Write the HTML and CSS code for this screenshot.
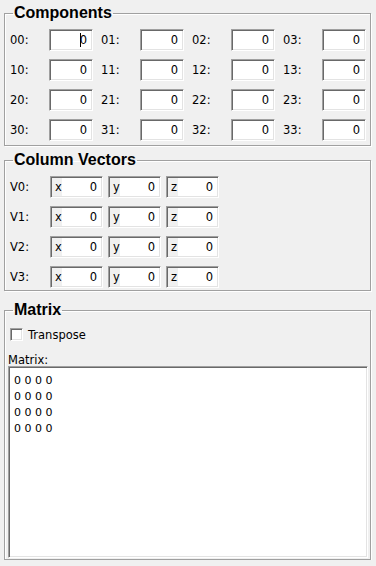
FILE: index.html
```html
<!DOCTYPE html>
<html>
<head>
	<title>Matrix</title>
	<link rel="stylesheet" href="styles.css">
</head>
<body>
	<fieldset class="group comps">
		<legend>Components</legend>
		<div class="grid">
			<div class="cell"><label>00:</label><span class="focus"><input class="num" value="0"><span class="caret"></span></span></div>
			<div class="cell"><label>01:</label><input class="num" value="0"></div>
			<div class="cell"><label>02:</label><input class="num" value="0"></div>
			<div class="cell"><label>03:</label><input class="num" value="0"></div>
			<div class="cell"><label>10:</label><input class="num" value="0"></div>
			<div class="cell"><label>11:</label><input class="num" value="0"></div>
			<div class="cell"><label>12:</label><input class="num" value="0"></div>
			<div class="cell"><label>13:</label><input class="num" value="0"></div>
			<div class="cell"><label>20:</label><input class="num" value="0"></div>
			<div class="cell"><label>21:</label><input class="num" value="0"></div>
			<div class="cell"><label>22:</label><input class="num" value="0"></div>
			<div class="cell"><label>23:</label><input class="num" value="0"></div>
			<div class="cell"><label>30:</label><input class="num" value="0"></div>
			<div class="cell"><label>31:</label><input class="num" value="0"></div>
			<div class="cell"><label>32:</label><input class="num" value="0"></div>
			<div class="cell"><label>33:</label><input class="num" value="0"></div>
		</div>
	</fieldset>

	<fieldset class="group vectors">
		<legend>Column Vectors</legend>
		<div class="vecs">
			<div class="vrow">
				<label>V0:</label>
				<span class="vec"><span class="axis">x</span><input value="0"></span>
				<span class="vec"><span class="axis">y</span><input value="0"></span>
				<span class="vec"><span class="axis">z</span><input value="0"></span>
			</div>
			<div class="vrow">
				<label>V1:</label>
				<span class="vec"><span class="axis">x</span><input value="0"></span>
				<span class="vec"><span class="axis">y</span><input value="0"></span>
				<span class="vec"><span class="axis">z</span><input value="0"></span>
			</div>
			<div class="vrow">
				<label>V2:</label>
				<span class="vec"><span class="axis">x</span><input value="0"></span>
				<span class="vec"><span class="axis">y</span><input value="0"></span>
				<span class="vec"><span class="axis">z</span><input value="0"></span>
			</div>
			<div class="vrow">
				<label>V3:</label>
				<span class="vec"><span class="axis">x</span><input value="0"></span>
				<span class="vec"><span class="axis">y</span><input value="0"></span>
				<span class="vec"><span class="axis">z</span><input value="0"></span>
			</div>
		</div>
	</fieldset>

	<fieldset class="group matrix">
		<legend>Matrix</legend>
		<div class="check">
			<input type="checkbox" id="transpose">
			<label for="transpose">Transpose</label>
		</div>
		<div class="caption">Matrix:</div>
		<textarea class="out">0 0 0 0
0 0 0 0
0 0 0 0
0 0 0 0</textarea>
	</fieldset>
</body>
</html>
```

FILE: styles.css
```css
body {
	margin: 0;
	background: #f0f0f0;
	color: #000;
	font: 11.5px "DejaVu Sans", sans-serif;
}

.group {
	margin: 0 5px 0 4px;
	padding: 0 2px 0 3px;
	border: 1px solid #a0a0a0;
	box-shadow: inset 1px 1px 0 #fff, 1px 1px 0 #fff;
}

.group legend {
	margin-left: 5px;
	padding: 0 1px;
	font: bold 16px "Liberation Sans", Arial, sans-serif;
	line-height: 18px;
}

.comps {
	margin-top: 4px;
	padding-bottom: 4px;
}

.vectors {
	margin-top: 5px;
	padding-bottom: 2px;
}

.matrix {
	margin-top: 10px;
	padding-bottom: 1px;
}

/* components */
.grid {
	display: grid;
	grid-template-columns: repeat(4, 83px);
	gap: 8px;
	padding: 7px 0 0 2px;
}

.cell {
	display: flex;
	align-items: center;
}

.cell label {
	width: 39px;
}

.num {
	width: 44px;
	height: 22px;
	box-sizing: border-box;
	margin: 0;
	padding: 0 5px 0 0;
	border: 1px solid;
	border-color: #a0a0a0 #fff #fff #a0a0a0;
	box-shadow: inset 1px 1px 0 #696969, inset -1px -1px 0 #e3e3e3;
	background: #fff;
	font: inherit;
	color: #000;
	text-align: right;
	outline: none;
}

.focus {
	position: relative;
	display: block;
	width: 44px;
	height: 22px;
}

.caret {
	position: absolute;
	right: 12px;
	top: 4px;
	width: 1px;
	height: 14px;
	background: #000;
}

/* column vectors */
.vecs {
	display: flex;
	flex-direction: column;
	gap: 8px;
	padding: 7px 0 0 2px;
}

.vrow {
	display: flex;
	align-items: center;
	gap: 5px;
}

.vrow label {
	width: 35px;
}

.vec {
	display: flex;
	width: 53px;
	height: 22px;
	box-sizing: border-box;
	padding: 1px;
	border: 1px solid;
	border-color: #a0a0a0 #fff #fff #a0a0a0;
	box-shadow: inset 1px 1px 0 #696969, inset -1px -1px 0 #e3e3e3;
	background: #fff;
}

.axis {
	width: 7px;
	padding-left: 3px;
	background: #f0f0f0;
	line-height: 18px;
}

.vec input {
	flex: 1;
	min-width: 0;
	margin: 0;
	padding: 0 4px 0 0;
	border: none;
	background: #fff;
	font: inherit;
	color: #000;
	text-align: right;
	outline: none;
}

/* matrix */
.check {
	display: flex;
	align-items: center;
	height: 13px;
	margin-top: 9px;
	padding-left: 2px;
}

.check input {
	appearance: none;
	width: 13px;
	height: 13px;
	margin: 0 5px 0 0;
	border: 1px solid;
	border-color: #a0a0a0 #fff #fff #a0a0a0;
	box-shadow: inset 1px 1px 0 #696969, inset -1px -1px 0 #e3e3e3;
	background: #fff;
}

.caption {
	margin-top: 13px;
	line-height: 12px;
}

.out {
	display: block;
	width: 360px;
	height: 192px;
	box-sizing: border-box;
	margin: 0;
	padding: 6px 5px;
	border: 1px solid;
	border-color: #a0a0a0 #fff #fff #a0a0a0;
	box-shadow: inset 1px 1px 0 #696969, inset -1px -1px 0 #e3e3e3;
	background: #fff;
	font: 11px "DejaVu Sans", sans-serif;
	line-height: 16px;
	color: #000;
	resize: none;
	outline: none;
}
```
